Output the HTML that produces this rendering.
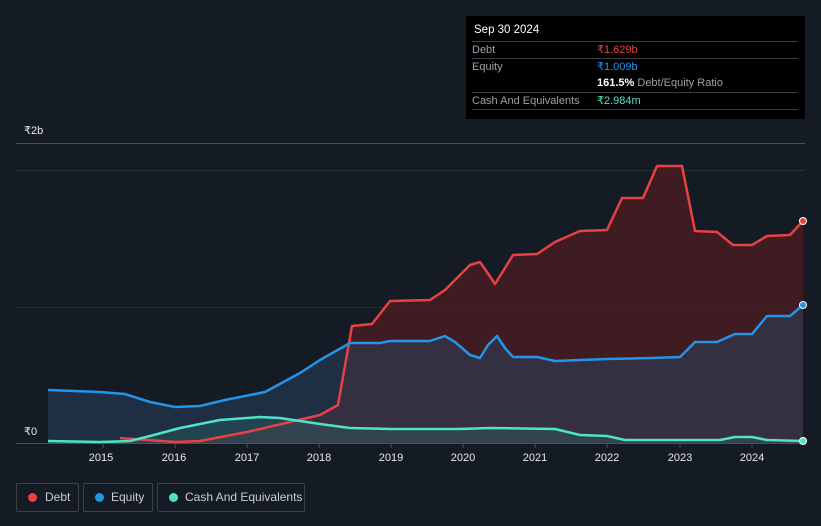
<!DOCTYPE html>
<html><head><meta charset="utf-8"><style>
body{margin:0;width:821px;height:526px;background:#151b25;font-family:"Liberation Sans",sans-serif;overflow:hidden;position:relative}
.tip{position:absolute;left:466px;top:16px;width:339px;height:103px;background:#000;font-size:11px;color:#9aa0a6}
.tip .h{position:absolute;left:8px;top:8px;color:#fff;font-size:11.5px}
.row{position:absolute;left:6px;width:326px;border-top:1px solid #3a3d42;height:17px;line-height:17px}
.row span{position:absolute;left:125px}
.leg{position:absolute;top:483px;height:27px;border:1px solid #3b404a;border-radius:2px;color:#c9cdd3;font-size:12px;line-height:27px}
.leg i{position:absolute;left:11px;top:9px;width:9px;height:9px;border-radius:50%}
.ax{position:absolute;color:#e6e8eb;font-size:11px}
</style></head><body>
<div class="tip"><div class="h">Sep 30 2024</div>
<div class="row" style="top:25px">Debt<span style="color:#e84142">₹1.629b</span></div>
<div class="row" style="top:42px">Equity<span style="color:#2394e8">₹1.009b</span></div>
<div class="row" style="top:59px;border-top:none"><span style="color:#9aa0a6"><b style="color:#fff;font-weight:bold">161.5%</b> Debt/Equity Ratio</span></div>
<div class="row" style="top:76px">Cash And Equivalents<span style="color:#4fe3c4">₹2.984m</span></div>
<div class="row" style="top:93px;height:0"></div>
</div>
<div class="ax" style="left:24px;top:124px">₹2b</div>
<div class="ax" style="left:24px;top:425px">₹0</div>
<svg width="821" height="526" style="position:absolute;left:0;top:0">
<line x1="16" y1="143.5" x2="805" y2="143.5" stroke="#4a4f58"/>
<line x1="16" y1="170.5" x2="805" y2="170.5" stroke="#272c35"/>
<line x1="16" y1="307.5" x2="805" y2="307.5" stroke="#222731"/>
<path d="M120,438 L175,442 L200,441 L247,432 L290,422 L320,415 L338,405 L352,326 L372,324 L390,301 L430,300 L445,290 L470,265 L480,262 L487,272 L495,284 L505,268 L513,255 L537,254 L555,242 L580,231 L607,230 L622,198 L643,198 L657,166 L682,166 L695,231 L717,232 L733,245 L752,245 L767,236 L790,235 L803,221 L803,443 L120,443Z" fill="#4a1c22" fill-opacity="0.8"/>
<path d="M48,390 L100,392 L125,394 L150,402 L175,407 L200,406 L225,400 L265,392 L300,373 L320,360 L350,343 L380,343 L390,341 L430,341 L445,336 L455,342 L470,355 L480,358 L488,345 L497,336 L505,348 L513,357 L537,357 L555,361 L580,360 L607,359 L650,358 L680,357 L695,342 L717,342 L735,334 L752,334 L767,316 L790,316 L803,305 L803,443 L48,443Z" fill="#2a4a6a" fill-opacity="0.45"/>
<path d="M48,441 L100,442 L130,441 L150,436 L180,428 L220,420 L260,417 L280,418 L320,424 L350,428 L390,429 L460,429 L490,428 L555,429 L580,435 L607,436 L625,440 L720,440 L735,437 L752,437 L767,440 L803,441 L803,443 L48,443Z" fill="#2f6b66" fill-opacity="0.35"/>
<line x1="16" y1="443.5" x2="805" y2="443.5" stroke="#4a4f58"/>
<g fill="none" stroke-width="2.5" stroke-linejoin="round">
<path d="M120,438 L175,442 L200,441 L247,432 L290,422 L320,415 L338,405 L352,326 L372,324 L390,301 L430,300 L445,290 L470,265 L480,262 L487,272 L495,284 L505,268 L513,255 L537,254 L555,242 L580,231 L607,230 L622,198 L643,198 L657,166 L682,166 L695,231 L717,232 L733,245 L752,245 L767,236 L790,235 L803,221" stroke="#e84142"/>
<path d="M48,390 L100,392 L125,394 L150,402 L175,407 L200,406 L225,400 L265,392 L300,373 L320,360 L350,343 L380,343 L390,341 L430,341 L445,336 L455,342 L470,355 L480,358 L488,345 L497,336 L505,348 L513,357 L537,357 L555,361 L580,360 L607,359 L650,358 L680,357 L695,342 L717,342 L735,334 L752,334 L767,316 L790,316 L803,305" stroke="#2394e8"/>
<path d="M48,441 L100,442 L130,441 L150,436 L180,428 L220,420 L260,417 L280,418 L320,424 L350,428 L390,429 L460,429 L490,428 L555,429 L580,435 L607,436 L625,440 L720,440 L735,437 L752,437 L767,440 L803,441" stroke="#4fe3c4"/>
</g>
<circle cx="803" cy="221" r="3.5" fill="#e84142" stroke="#fff" stroke-width="1"/>
<circle cx="803" cy="305" r="3.5" fill="#2394e8" stroke="#fff" stroke-width="1"/>
<circle cx="803" cy="441" r="3.5" fill="#4fe3c4" stroke="#fff" stroke-width="1"/>
<g stroke="#4a4f58"><line x1="103" y1="443" x2="103" y2="448"/><line x1="175" y1="443" x2="175" y2="448"/><line x1="247" y1="443" x2="247" y2="448"/><line x1="319" y1="443" x2="319" y2="448"/><line x1="391" y1="443" x2="391" y2="448"/><line x1="463" y1="443" x2="463" y2="448"/><line x1="535" y1="443" x2="535" y2="448"/><line x1="607" y1="443" x2="607" y2="448"/><line x1="680" y1="443" x2="680" y2="448"/><line x1="752" y1="443" x2="752" y2="448"/></g>
<g fill="#e6e8eb" font-size="11" font-family="Liberation Sans,sans-serif" text-anchor="middle">
<text x="101" y="461">2015</text><text x="174" y="461">2016</text><text x="247" y="461">2017</text><text x="319" y="461">2018</text><text x="391" y="461">2019</text><text x="463" y="461">2020</text><text x="535" y="461">2021</text><text x="607" y="461">2022</text><text x="680" y="461">2023</text><text x="752" y="461">2024</text></g>
</svg>
<div class="leg" style="left:16px;width:61px"><i style="background:#e84142"></i><span style="position:absolute;left:28px">Debt</span></div>
<div class="leg" style="left:83px;width:68px"><i style="background:#2394e8"></i><span style="position:absolute;left:27px">Equity</span></div>
<div class="leg" style="left:157px;width:146px"><i style="background:#4fe3c4"></i><span style="position:absolute;left:27px">Cash And Equivalents</span></div>
</body></html>
